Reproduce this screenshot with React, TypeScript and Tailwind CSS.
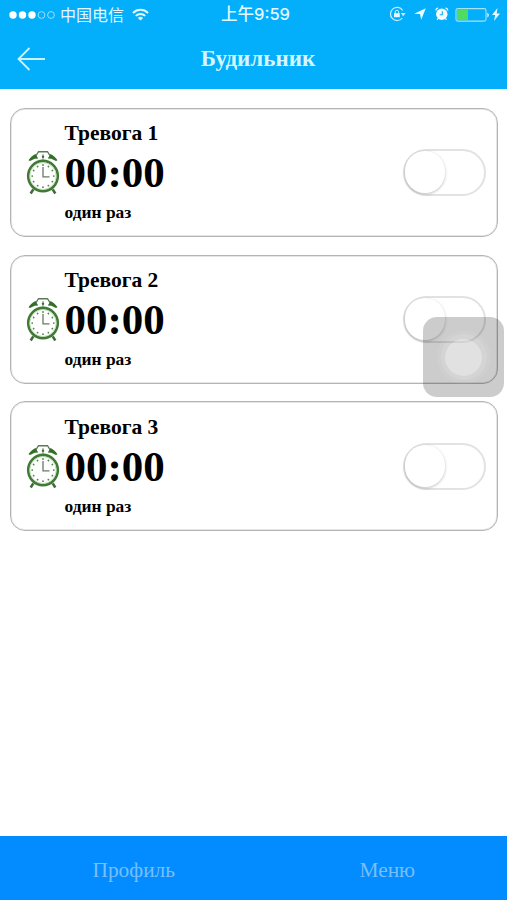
interface Alarm {
  id: number;
  title: string;
  time: string;
  repeat: string;
}

const alarms: Alarm[] = [
  { id: 1, title: "Тревога 1", time: "00:00", repeat: "один раз" },
  { id: 2, title: "Тревога 2", time: "00:00", repeat: "один раз" },
  { id: 3, title: "Тревога 3", time: "00:00", repeat: "один раз" },
];

const ticks = [0, 30, 60, 90, 120, 150, 180, 210, 240, 270, 300, 330];

function AlarmClockIcon() {
  return (
    <svg width="34" height="45" viewBox="0 0 34 44" preserveAspectRatio="none" fill="none" className="shrink-0">
      <path d="M10 5.5 12.5 1.700h9L24 5.500" stroke="#5c7a55" strokeWidth="1.300" />
      <path d="M17 4v6" stroke="#7b9a74" strokeWidth="1" />
      <circle cx="17" cy="6.500" r="1.200" fill="#3c6f32" />
      <path d="M2.500 10C4 7.500 6.500 5 9.500 3.800l2.700 4.500-3.500.2-4.700 2.300Z" fill="#336f29" />
      <path d="M31.500 10C30 7.500 27.500 5 24.500 3.800l-2.700 4.500 3.500.2 4.700 2.300Z" fill="#336f29" />
      <path d="m7.300 38.500-2.600 4M26.700 38.500l2.600 4" stroke="#42693d" strokeWidth="2.600" />
      <circle cx="17" cy="25.500" r="14.800" fill="#fff" stroke="#3f7b33" strokeWidth="2.600" />
      <circle cx="17" cy="25.500" r="13.200" stroke="#b4cbae" strokeWidth=".7" />
      {ticks.map((angle) => (
        <circle key={angle} cx="17" cy="14.700" r=".9" fill="#4f8746" transform={`rotate(${angle} 17 25.5)`} />
      ))}
      <path d="M17 16.500v9.700h6.500" stroke="#6b7968" strokeWidth="1.300" />
    </svg>
  );
}

function Toggle() {
  return (
    <div className="h-[47px] w-[83px] shrink-0 rounded-full border-2 border-[#e2e2e2] bg-white">
      <div className="h-[42px] w-[40px] rounded-full bg-white shadow-[0_1px_3px_rgba(0,0,0,0.25)]" />
    </div>
  );
}

function StatusBar() {
  return (
    <div className="flex h-[29px] items-center text-[#e4f8ff]">
      <svg width="47" height="10" viewBox="0 0 47 10" className="ml-[9px]">
        <circle cx="4" cy="5" r="3.700" fill="#fff" />
        <circle cx="13.500" cy="5" r="3.700" fill="#fff" />
        <circle cx="23" cy="5" r="3.700" fill="#fff" />
        <circle cx="32.500" cy="5" r="3.400" fill="none" stroke="#a8e6ff" strokeWidth=".9" />
        <circle cx="42" cy="5" r="3.400" fill="none" stroke="#a8e6ff" strokeWidth=".9" />
      </svg>
      <span className="ml-[4px] w-[64px] font-['Noto_Sans_CJK_SC',sans-serif] text-[16px] leading-[29px] whitespace-nowrap">
        中国电信
      </span>
      <svg width="17" height="13" viewBox="0 0 17 13" fill="none" stroke="#e4f8ff" strokeWidth="2" className="ml-[8px] -mt-[1px]">
        <path d="M1 5c4.200-4.200 10.800-4.200 15 0" />
        <path d="M3.800 7.900c2.700-2.600 6.700-2.600 9.400 0" />
        <path d="m5.900 9.900 2.600 2.700 2.600-2.700c-1.500-1.400-3.700-1.400-5.200 0Z" fill="#e4f8ff" stroke="none" />
      </svg>
      <span className="ml-[72px] w-[72px] font-['Inter','Noto_Sans_CJK_SC',sans-serif] text-[16.500px] leading-[29px] font-medium whitespace-nowrap">
        上午9:59
      </span>
      <svg width="18" height="16" viewBox="0 0 18 16" fill="none" stroke="#c9f1ff" className="ml-[96px] -mt-[1px]">
        <path d="M13.600 4.300A6.600 6.600 0 1 0 13.300 12" strokeWidth="1.200" />
        <path d="M11.800 7h4.800l-2.400 3.200Z" fill="#c9f1ff" stroke="none" />
        <path d="M6.200 7.500V6a1.700 1.700 0 0 1 3.400 0v1.500" strokeWidth="1" />
        <path d="M5 7.200h5.800v4H5Z" fill="#e4f8ff" stroke="none" />
      </svg>
      <svg width="12" height="12" viewBox="0 0 12 12" className="ml-[7px] -mt-[1px]">
        <path d="M11.800.200 7.200 11.700 6 6 .200 5.800Z" fill="#e8faff" />
      </svg>
      <svg width="15" height="14" viewBox="0 0 15 14" className="ml-[8px] -mt-[1px]">
        <path d="M1.800 3.500A2.500 2.500 0 0 1 4.200 1.200M13.800 3.500A2.500 2.500 0 0 0 11.400 1.200" stroke="#e8faff" strokeWidth="1.200" fill="none" />
        <circle cx="7.800" cy="7.300" r="5.700" fill="#f2fcff" />
        <path d="m4 11.500-.8 1.400M11.600 11.500l.8 1.400" stroke="#e8faff" strokeWidth="1.300" />
        <path d="M8.300 4.200v3.600H5.700" stroke="#12acf3" strokeWidth="1.100" fill="none" />
      </svg>
      <svg width="35" height="14" viewBox="0 0 35 14" className="ml-[6px]">
        <rect x="1" y=".600" width="30" height="12.500" rx="1.800" fill="none" stroke="#a5e2f2" strokeWidth="1.100" />
        <rect x="2" y="1.500" width="11" height="10.700" fill="#4fdc62" />
        <path d="M32.300 4.700c2 .7 2 4 0 4.700Z" fill="#d5f5ff" />
      </svg>
      <svg width="8" height="13" viewBox="0 0 8 13" className="ml-[2px]">
        <path d="M5.500 0 0 7h3.200L2 13l6-7.500H4.700Z" fill="#e8faff" />
      </svg>
    </div>
  );
}

function AlarmCard({ alarm }: { alarm: Alarm }) {
  return (
    <div className="flex h-[129.400px] items-center rounded-[15px] border border-[#b4b4b4] bg-white pr-[11px] pl-[15px] shadow-[inset_0_0_0_1px_#e6e6e6]">
      <AlarmClockIcon />
      <div className="ml-[5px] flex grow flex-col font-bold text-black">
        <span className="-mt-px text-[21.500px] leading-[24px]">{alarm.title}</span>
        <span className="mt-[4px] text-[43px] leading-[48px]">{alarm.time}</span>
        <span className="mt-[4px] text-[17.400px] leading-[22px]">{alarm.repeat}</span>
      </div>
      <Toggle />
    </div>
  );
}

function AssistiveTouch() {
  return (
    <div className="absolute top-[317px] left-[423px] flex h-[80px] w-[81px] items-center justify-center rounded-[14px] bg-black/20">
      <div className="flex size-[54px] items-center justify-center rounded-full bg-white/5">
        <div className="flex size-[46px] items-center justify-center rounded-full bg-white/10">
          <div className="size-[37px] rounded-full bg-white/30" />
        </div>
      </div>
    </div>
  );
}

export default function App() {
  return (
    <div className="relative flex h-[900px] w-[507px] flex-col overflow-hidden bg-white font-['Liberation_Serif',serif]">
      <header className="h-[89px] shrink-0 bg-[#03aefb]">
        <StatusBar />
        <div className="grid h-[59px] grid-cols-[60px_1fr_51px] items-center">
          <svg width="29" height="24" viewBox="0 0 29 24" fill="none" stroke="#c9f2ff" strokeWidth="1.800" className="ml-[17px]">
            <path d="M28 12H1.500M12.500 1 1.500 12l11 11" />
          </svg>
          <h1 className="text-center text-[23px] leading-[28px] font-bold text-[#d5f6ff]">Будильник</h1>
        </div>
      </header>

      <main className="flex grow flex-col gap-[17.300px] px-[9.500px] pt-[19px]">
        {alarms.map((alarm) => (
          <AlarmCard key={alarm.id} alarm={alarm} />
        ))}
      </main>

      <nav className="grid h-[64px] shrink-0 grid-cols-2 items-center bg-[#028cff] text-[21.400px] text-[#78bffa]">
        <span className="pt-[4px] pl-[14px] text-center">Профиль</span>
        <span className="pt-[4px] pl-[14px] text-center">Меню</span>
      </nav>

      <AssistiveTouch />
    </div>
  );
}
